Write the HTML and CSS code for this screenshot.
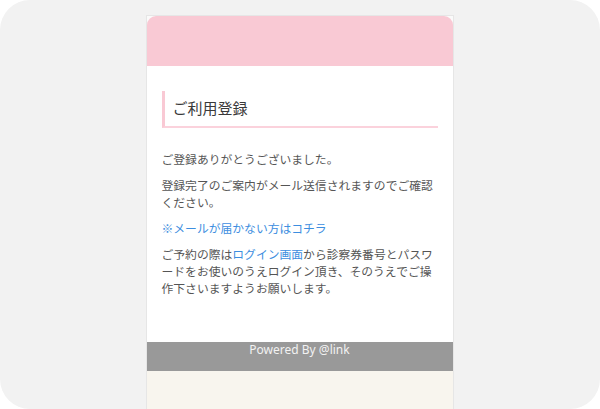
FILE: index.html
```html
<!DOCTYPE html>
<html lang="ja">
<head>
<meta charset="utf-8">
<title>ご利用登録</title>
<link rel="stylesheet" href="styles.css">
</head>
<body>
<div class="frame">
  <div class="card">
    <header class="card-head"></header>
    <main class="card-body">
      <h1 class="title">ご利用登録</h1>
      <p class="text">ご登録ありがとうございました。</p>
      <p class="text">登録完了のご案内がメール送信されますのでご確認ください。</p>
      <p class="text"><a class="link" href="#">※メールが届かない方はコチラ</a></p>
      <p class="text">ご予約の際は<a class="link" href="#">ログイン画面</a>から診察券番号とパスワードをお使いのうえログイン頂き、そのうえでご操作下さいますようお願いします。</p>
    </main>
    <footer class="card-foot">Powered By @link</footer>
    <div class="card-bottom"></div>
  </div>
</div>
</body>
</html>
```
FILE: styles.css
```css
html, body {
  margin: 0;
  padding: 0;
  background: #ffffff;
}
.frame {
  width: 600px;
  height: 409px;
  box-sizing: border-box;
  background: #f2f2f2;
  border-radius: 30px;
  padding: 15px 0 0 1px;
  display: flex;
  justify-content: center;
  overflow: hidden;
  font-family: "Noto Sans", "Noto Sans CJK JP", sans-serif;
}
.frame > .card {
  margin-left: -2px;
}
.card {
  width: 308px;
  box-sizing: border-box;
  border: 1px solid #e6e6e6;
  border-bottom: none;
  background: #fafafa;
  display: flex;
  flex-direction: column;
}
.card-head {
  height: 50px;
  background: #f9c9d4;
  border-radius: 9px 9px 0 0;
}
.card-body {
  background: #ffffff;
  height: 276px;
  box-sizing: border-box;
  padding: 25px 15px 0 15px;
}
.title {
  margin: 0 0 22px 0;
  font-family: "Noto Sans CJK JP", sans-serif;
  font-size: 15px;
  font-weight: 400;
  color: #3a3a3a;
  line-height: 20px;
  padding: 7px 0 8px 8px;
  border-left: 3px solid #f9c9d4;
  border-bottom: 2px solid #fbd2dc;
}
.text {
  margin: 0 0 9px 0;
  font-family: "Noto Sans CJK JP", sans-serif;
  font-size: 11.8px;
  line-height: 17px;
  color: #555555;
}
.link {
  color: #3d8ee0;
  text-decoration: none;
}
.card-foot {
  height: 29px;
  background: #999999;
  color: #f2f2f2;
  font-size: 12px;
  line-height: 15px;
  text-align: center;
}
.card-bottom {
  flex: 1;
  background: #f8f5ee;
}
```
